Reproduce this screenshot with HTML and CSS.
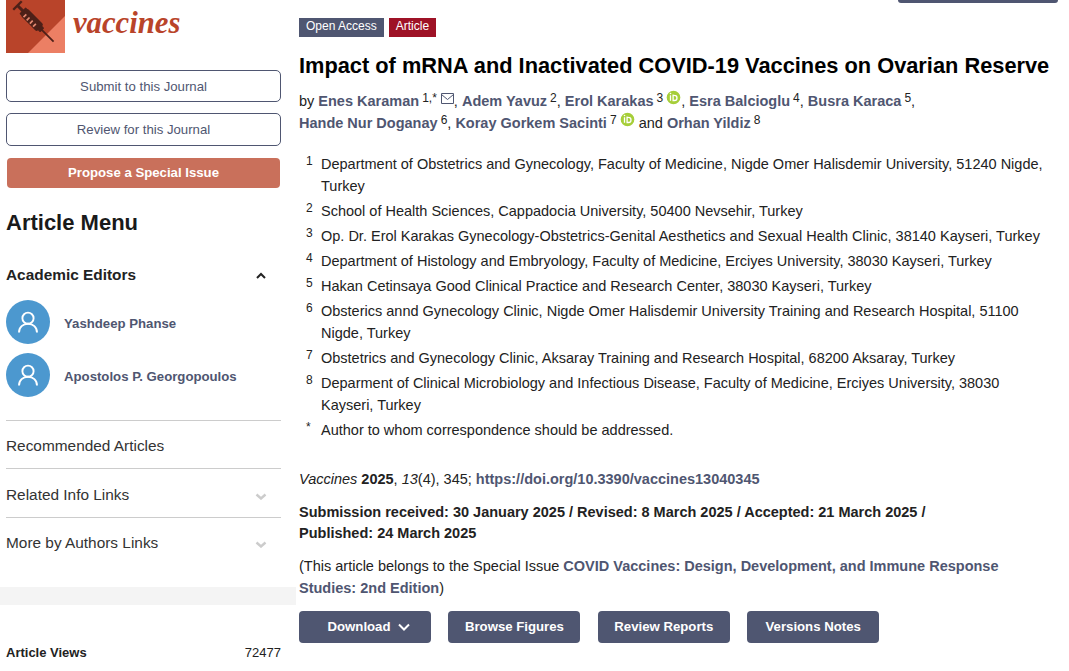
FILE: index.html
```html
<!DOCTYPE html>
<html lang="en">
<head>
<meta charset="utf-8">
<title>Vaccines</title>
<link rel="stylesheet" href="styles.css">
</head>
<body>
<div class="page">
  <aside class="sidebar">
    <div class="journal">
      <svg class="journal-mark" viewBox="0 0 59 59" width="59" height="59">
        <rect width="59" height="59" fill="#b9442a"/>
        <path d="M59 22V59H22z" fill="#ec7f64"/>
        <g transform="translate(11.5 11.5) rotate(45)" fill="#4d2018">
          <rect x="-1.200" y="-6" width="2.400" height="12"/>
          <rect x="0" y="-1.500" width="9" height="3"/>
          <rect x="7" y="-4.500" width="3" height="9" rx="1"/>
          <rect x="9" y="-5" width="23" height="10" rx="2"/>
          <rect x="31" y="-3" width="4" height="6" rx="1"/>
          <rect x="34" y="-0.900" width="17" height="1.800"/>
          <path d="M12.500 0v4M17 0v4M21.500 0v4M26 0v4" stroke="#e58a72" stroke-width="1.700"/>
        </g>
      </svg>
      <span class="journal-name">vaccines</span>
    </div>
    <div class="side-actions">
      <a class="side-btn">Submit to this Journal</a>
      <a class="side-btn review">Review for this Journal</a>
      <a class="side-btn propose">Propose a Special Issue</a>
    </div>
    <h2 class="menu-title">Article Menu</h2>
    <div class="menu-head">
      <span>Academic Editors</span>
      <svg class="chevron" viewBox="0 0 12 8" width="12" height="8"><path d="M2 7l4-4 4 4"/></svg>
    </div>
    <div class="editor">
      <svg viewBox="0 0 44 44" width="44" height="44"><circle cx="22" cy="22" r="22" fill="#4c98cf"/><g fill="none" stroke="#fff" stroke-width="1.900"><circle cx="22" cy="18.200" r="5.600"/><path d="M13 32.500c0-5.500 4-8.700 9-8.700s9 3.200 9 8.700"/></g></svg>
      <a>Yashdeep Phanse</a>
    </div>
    <div class="editor">
      <svg viewBox="0 0 44 44" width="44" height="44"><circle cx="22" cy="22" r="22" fill="#4c98cf"/><g fill="none" stroke="#fff" stroke-width="1.900"><circle cx="22" cy="18.200" r="5.600"/><path d="M13 32.500c0-5.500 4-8.700 9-8.700s9 3.200 9 8.700"/></g></svg>
      <a>Apostolos P. Georgopoulos</a>
    </div>
    <div class="menu">
      <div class="menu-item">Recommended Articles</div>
      <div class="menu-item related">Related Info Links
        <svg class="chevron down" viewBox="0 0 12 8" width="12" height="8"><path d="M1.500 2.500L6 6.500l4.500-4"/></svg>
      </div>
      <div class="menu-item">More by Authors Links
        <svg class="chevron down" viewBox="0 0 12 8" width="12" height="8"><path d="M1.500 2.500L6 6.500l4.500-4"/></svg>
      </div>
    </div>
    <div class="divider"></div>
    <div class="views"><b>Article Views</b><span>72477</span></div>
  </aside>

  <main class="article">
    <div class="top-button"></div>
    <div class="labels">
      <span class="label">Open Access</span>
      <span class="label type">Article</span>
    </div>
    <h1 class="title">Impact of mRNA and Inactivated COVID-19 Vaccines on Ovarian Reserve</h1>
    <div class="authors">
      by <b>Enes Karaman</b> <sup>1,*</sup> <svg class="mail" viewBox="0 0 13 11" width="13" height="11"><path d="M.5.500h12v10H.5zM.5 1.500l6 5 6-5"/></svg>, <b>Adem Yavuz</b> <sup>2</sup>, <b>Erol Karakas</b> <sup>3</sup> <svg class="orcid" viewBox="0 0 15 15" width="15" height="15"><circle cx="7.500" cy="7.500" r="7.500" fill="#a6ce39"/><path d="M4.500 5.200v5.500M7.100 5.200v5.300h1.300a2.600 2.600 0 0 0 0-5.200z"/><circle cx="4.500" cy="3.500" r=".8" fill="#fff" stroke="none"/></svg>, <b>Esra Balcioglu</b> <sup>4</sup>, <b>Busra Karaca</b> <sup>5</sup>,<br>
      <b>Hande Nur Doganay</b> <sup>6</sup>, <b>Koray Gorkem Sacinti</b> <sup>7</sup> <svg class="orcid" viewBox="0 0 15 15" width="15" height="15"><circle cx="7.500" cy="7.500" r="7.500" fill="#a6ce39"/><path d="M4.500 5.200v5.500M7.100 5.200v5.300h1.300a2.600 2.600 0 0 0 0-5.200z"/><circle cx="4.500" cy="3.500" r=".8" fill="#fff" stroke="none"/></svg> and <b>Orhan Yildiz</b> <sup>8</sup>
    </div>
    <div class="affiliations">
      <div class="aff"><sup>1</sup><div>Department of Obstetrics and Gynecology, Faculty of Medicine, Nigde Omer Halisdemir University, 51240 Nigde,<br>Turkey</div></div>
      <div class="aff"><sup>2</sup><div>School of Health Sciences, Cappadocia University, 50400 Nevsehir, Turkey</div></div>
      <div class="aff"><sup>3</sup><div>Op. Dr. Erol Karakas Gynecology-Obstetrics-Genital Aesthetics and Sexual Health Clinic, 38140 Kayseri, Turkey</div></div>
      <div class="aff"><sup>4</sup><div>Department of Histology and Embryology, Faculty of Medicine, Erciyes University, 38030 Kayseri, Turkey</div></div>
      <div class="aff"><sup>5</sup><div>Hakan Cetinsaya Good Clinical Practice and Research Center, 38030 Kayseri, Turkey</div></div>
      <div class="aff"><sup>6</sup><div>Obsterics annd Gynecology Clinic, Nigde Omer Halisdemir University Training and Research Hospital, 51100<br>Nigde, Turkey</div></div>
      <div class="aff"><sup>7</sup><div>Obstetrics and Gynecology Clinic, Aksaray Training and Research Hospital, 68200 Aksaray, Turkey</div></div>
      <div class="aff"><sup>8</sup><div>Deparment of Clinical Microbiology and Infectious Disease, Faculty of Medicine, Erciyes University, 38030<br>Kayseri, Turkey</div></div>
      <div class="aff"><sup>*</sup><div>Author to whom correspondence should be addressed.</div></div>
    </div>
    <div class="citation"><em>Vaccines</em> <strong>2025</strong>, <em>13</em>(4), 345; <b>https://doi.org/10.3390/vaccines13040345</b></div>
    <div class="history">Submission received: 30 January 2025 / Revised: 8 March 2025 / Accepted: 21 March 2025 /<br>Published: 24 March 2025</div>
    <div class="belongs">(This article belongs to the Special Issue <b>COVID Vaccines: Design, Development, and Immune Response<br>Studies: 2nd Edition</b>)</div>
    <div class="buttons">
      <a class="btn download">Download <svg class="chevron light" viewBox="0 0 12 8" width="12" height="8"><path d="M1 1.500l5 5 5-5"/></svg></a>
      <a class="btn">Browse Figures</a>
      <a class="btn">Review Reports</a>
      <a class="btn">Versions Notes</a>
    </div>
  </main>
</div>
</body>
</html>
```
FILE: styles.css
```css
body {
  margin: 0;
  background: #fff;
  color: #222;
  font: 14.5px/22px "Liberation Sans", Arial, sans-serif;
}

.page {
  display: flex;
  height: 671px;
  overflow: hidden;
}

/* Sidebar */
.sidebar {
  width: 296px;
  flex: none;
}

.journal {
  display: flex;
  height: 53px;
  align-items: flex-end;
  padding-left: 6px;
}

.journal-name {
  margin: 0 0 13px 8px;
  color: #b9442a;
  font: italic bold 30.7px/34px "Liberation Serif", "Times New Roman", serif;
}

.side-actions {
  display: flex;
  flex-direction: column;
  margin: 17px 15px 0 6px;
}

.side-btn {
  box-sizing: border-box;
  height: 32px;
  border: 1px solid #4f5671;
  border-radius: 5px;
  color: #4f5671;
  font-size: 13.2px;
  line-height: 31px;
  text-align: center;
}

.side-btn.review {
  height: 33px;
  margin-top: 11px;
}

.side-btn.propose {
  height: 30px;
  margin: 12px 1px 0;
  border: 0;
  border-radius: 4px;
  background: #c9705b;
  color: #fff;
  font-weight: bold;
  line-height: 29px;
}

.menu-title {
  margin: 20px 0 0 6px;
  font-size: 22px;
  line-height: 30px;
  color: #1a1a1a;
}

.menu-head {
  display: flex;
  align-items: center;
  justify-content: space-between;
  margin: 26px 29px 14px 6px;
  font-size: 15.4px;
  font-weight: bold;
}

.chevron {
  flex: none;
  fill: none;
  stroke: #222;
  stroke-width: 2;
}

.chevron.down {
  margin-top: 2px;
  stroke: #ccc;
  stroke-width: 2.4;
}

.chevron.light {
  stroke: #fff;
}

.editor {
  display: flex;
  align-items: center;
  gap: 14px;
  height: 44px;
  margin: 0 0 9px 6px;
  color: #4f5671;
  font-size: 13.2px;
  font-weight: bold;
}

.editor a {
  padding-top: 4px;
}

.menu {
  margin: 23px 15px 0 6px;
}

.menu-item {
  display: flex;
  align-items: center;
  justify-content: space-between;
  height: 48px;
  padding: 2px 14px 0 0;
  box-sizing: border-box;
  border-top: 1px solid #ccc;
  color: #333;
  font-size: 15.4px;
}

.menu-item.related {
  height: 49px;
  padding-top: 3px;
}

.divider {
  height: 18px;
  margin-top: 22px;
  background: #f4f4f4;
}

.views {
  display: flex;
  justify-content: space-between;
  margin: 37px 15px 0 6px;
  font-size: 13px;
}

/* Article */
.article {
  flex: 1;
  padding-left: 3px;
}

.top-button {
  width: 160px;
  height: 3px;
  margin-left: 599px;
  border-radius: 0 0 5px 5px;
  background: #4f5671;
}

.labels {
  display: flex;
  gap: 5px;
  margin-top: 15px;
}

.label {
  height: 19px;
  padding: 0 7px;
  background: #4f5671;
  color: #fff;
  font-size: 12px;
  line-height: 16px;
}

.label.type {
  background: #9e1226;
}

.title {
  margin: 14px 0 0;
  color: #000;
  font-size: 21.8px;
  line-height: 30px;
}

.authors {
  margin-top: 9px;
  white-space: nowrap;
}

.authors b,
.citation b,
.belongs b {
  color: #4f5671;
}

sup {
  font-size: 12px;
  line-height: 0;
  vertical-align: 4px;
}

.authors sup {
  margin-left: -1px;
}

.mail {
  fill: none;
  stroke: #4f5671;
  vertical-align: 2px;
}

.orcid {
  margin-left: -1px;
  fill: none;
  stroke: #fff;
  stroke-width: 1.3;
  vertical-align: 1px;
}

.affiliations {
  margin-top: 19px;
}

.aff {
  display: flex;
  margin-bottom: 3px;
  white-space: nowrap;
}

.aff sup {
  width: 15px;
  padding-left: 7px;
  line-height: 16px;
}

.citation {
  margin-top: 27px;
}

.history {
  margin-top: 12px;
  font-weight: bold;
  line-height: 21px;
}

.belongs {
  margin-top: 11px;
}

.buttons {
  display: flex;
  gap: 17.4px;
  margin-top: 12px;
}

.btn {
  display: flex;
  align-items: center;
  justify-content: center;
  gap: 7px;
  box-sizing: border-box;
  width: 132px;
  height: 32px;
  border-radius: 4px;
  background: #4f5671;
  color: #fff;
  font-size: 13.2px;
  font-weight: bold;
}

.btn.download {
  padding-left: 7px;
}
```
